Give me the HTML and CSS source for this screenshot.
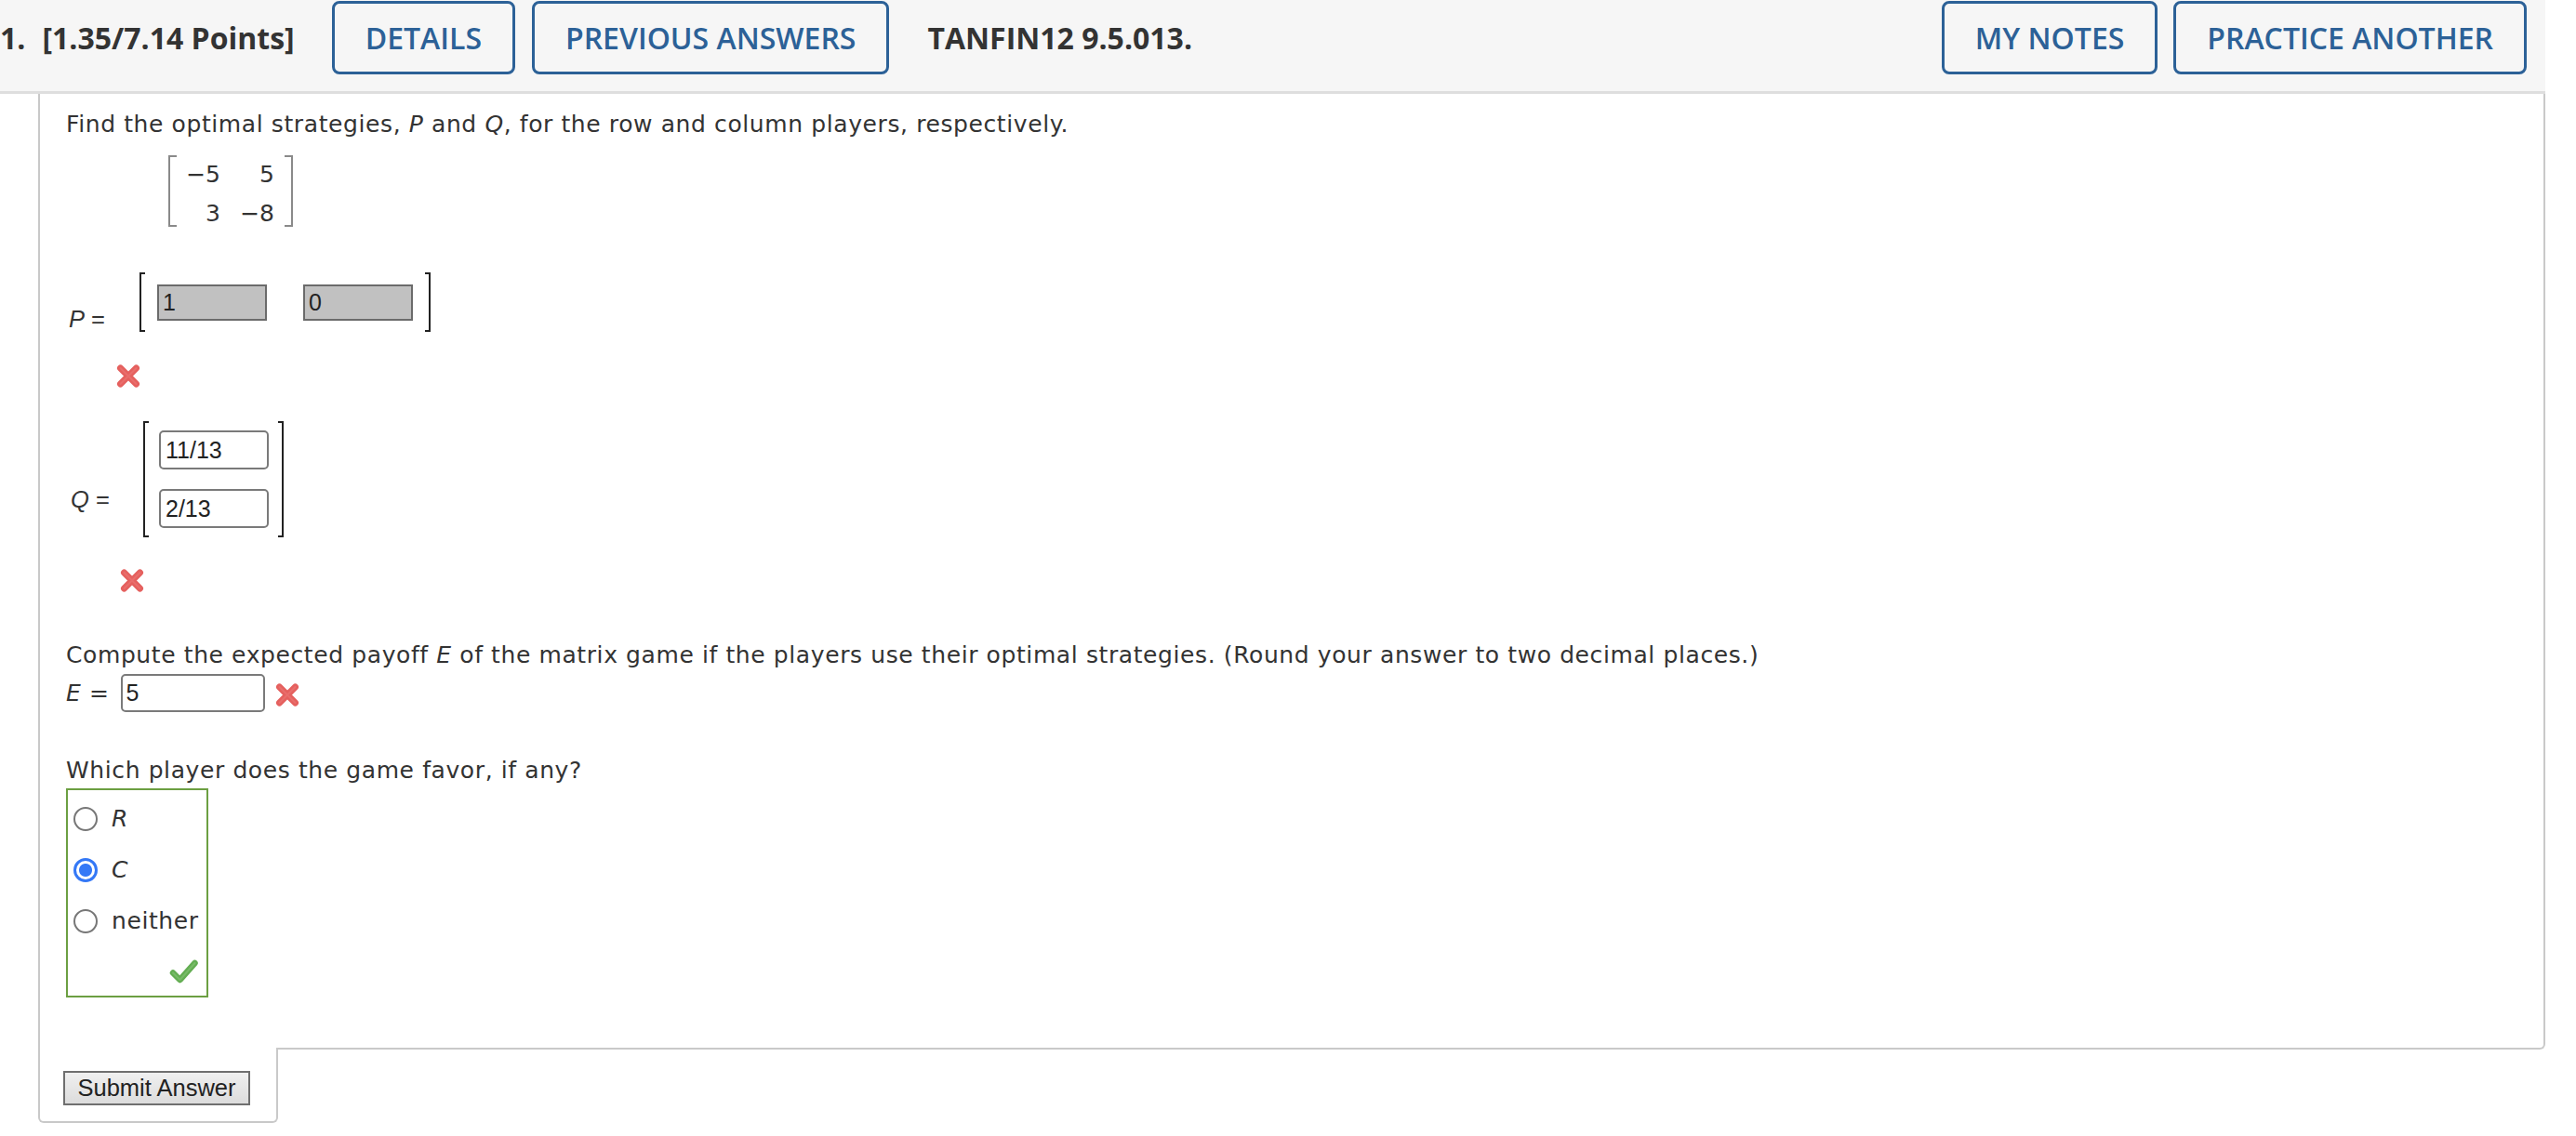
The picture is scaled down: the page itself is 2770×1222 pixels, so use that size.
FILE: index.html
```html
<!DOCTYPE html>
<html lang="en">
<head>
<meta charset="utf-8">
<title>TANFIN12 9.5.013</title>
<link rel="stylesheet" href="styles.css">
</head>
<body>
<div class="page">
  <header class="qhead">
    <span class="qnum">1.</span>
    <span class="qpts">[1.35/7.14 Points]</span>
    <span class="hbtn hbtn-details">DETAILS</span>
    <span class="hbtn hbtn-gap">PREVIOUS ANSWERS</span>
    <span class="qid">TANFIN12 9.5.013.</span>
    <span class="hbtn hbtn-push">MY NOTES</span>
    <span class="hbtn hbtn-gap2">PRACTICE ANOTHER</span>
  </header>

  <div class="qbody">
    <p class="txt p1">Find the optimal strategies, <i>P</i> and <i>Q</i>, for the row and column players, respectively.</p>

    <div class="matrix">
      <span class="mbr mbr-l"></span>
      <div class="mgrid">
        <span>&minus;5</span><span>5</span>
        <span>3</span><span>&minus;8</span>
      </div>
      <span class="mbr mbr-r"></span>
    </div>

    <div class="vrow prow">
      <span class="vlabel"><i>P</i> =</span>
      <span class="vbr vbr-l"></span>
      <div class="vcells vcells-h">
        <input class="ans ans-gray" type="text" value="1" readonly>
        <input class="ans ans-gray" type="text" value="0" readonly>
      </div>
      <span class="vbr vbr-r"></span>
    </div>

    <svg class="xmark xm-p" width="28" height="27" viewBox="0 0 28 27" aria-hidden="true"><path d="M5.5 5 L22.5 22 M22.5 5 L5.5 22" stroke="#e5605e" stroke-width="7" stroke-linecap="round" fill="none"/><path d="M5.5 5 L22.5 22 M22.5 5 L5.5 22" stroke="#ee7b79" stroke-width="2" stroke-linecap="round" fill="none" opacity="0.5"/></svg>

    <div class="vrow qrow">
      <span class="vlabel"><i>Q</i> =</span>
      <span class="vbr vbr-l vbr-tall"></span>
      <div class="vcells vcells-v">
        <input class="ans ans-white" type="text" value="11/13" readonly>
        <input class="ans ans-white" type="text" value="2/13" readonly>
      </div>
      <span class="vbr vbr-r vbr-tall"></span>
    </div>

    <svg class="xmark xm-q" width="28" height="27" viewBox="0 0 28 27" aria-hidden="true"><path d="M5.5 5 L22.5 22 M22.5 5 L5.5 22" stroke="#e5605e" stroke-width="7" stroke-linecap="round" fill="none"/><path d="M5.5 5 L22.5 22 M22.5 5 L5.5 22" stroke="#ee7b79" stroke-width="2" stroke-linecap="round" fill="none" opacity="0.5"/></svg>

    <p class="txt p2">Compute the expected payoff <i>E</i> of the matrix game if the players use their optimal strategies. (Round your answer to two decimal places.)</p>

    <div class="erow">
      <span class="elabel"><i>E</i> =</span>
      <input class="ans ans-e" type="text" value="5" readonly>
      <svg class="xmark xm-e" width="28" height="27" viewBox="0 0 28 27" aria-hidden="true"><path d="M5.5 5 L22.5 22 M22.5 5 L5.5 22" stroke="#e5605e" stroke-width="7" stroke-linecap="round" fill="none"/><path d="M5.5 5 L22.5 22 M22.5 5 L5.5 22" stroke="#ee7b79" stroke-width="2" stroke-linecap="round" fill="none" opacity="0.5"/></svg>
    </div>

    <p class="txt p3">Which player does the game favor, if any?</p>

    <div class="choices">
      <div class="opt"><span class="radio"></span><span class="optlabel"><i>R</i></span></div>
      <div class="opt"><span class="radio radio-on"></span><span class="optlabel"><i>C</i></span></div>
      <div class="opt"><span class="radio"></span><span class="optlabel">neither</span></div>
      <svg class="check" width="31" height="26" viewBox="0 0 31 26" aria-hidden="true"><path d="M4 14.5 L11.5 22 L27.5 4" stroke="#63ad52" stroke-width="6.5" stroke-linecap="round" stroke-linejoin="round" fill="none"/><path d="M4 14.5 L11.5 22 L27.5 4" stroke="#86c576" stroke-width="2" stroke-linecap="round" stroke-linejoin="round" fill="none" opacity="0.6"/></svg>
    </div>
  </div>

  <div class="submit-tab">
    <button class="submit" type="button">Submit Answer</button>
  </div>
</div>
</body>
</html>
```

FILE: styles.css
```css
html, body {
  margin: 0;
  padding: 0;
  background: #ffffff;
}

.page {
  width: 2737px;
}

/* ---------- header ---------- */
.qhead {
  display: flex;
  align-items: center;
  height: 79px;
  padding: 1px 20px 18px 0;
  background: #f6f6f6;
  border-bottom: 3px solid #dedede;
  font-family: "Open Sans", "Liberation Sans", sans-serif;
  font-weight: 700;
  font-size: 32px;
  color: #333333;
  white-space: nowrap;
}

.qpts {
  margin-left: 18px;
}

.hbtn {
  display: flex;
  align-items: center;
  box-sizing: border-box;
  height: 79px;
  padding: 0 33px;
  border: 3px solid #2c6197;
  border-radius: 8px;
  color: #2c6197;
  font-weight: 600;
}

.hbtn-details {
  margin-left: 40px;
}

.hbtn-gap {
  margin-left: 18px;
}

.qid {
  margin-left: 41px;
}

.hbtn-push {
  margin-left: auto;
}

.hbtn-gap2 {
  margin-left: 17px;
}

/* ---------- question body ---------- */
.qbody {
  margin-left: 41px;
  padding: 17px 0 54px 28px;
  border-left: 2px solid #c9c9c9;
  border-right: 2px solid #c9c9c9;
  border-bottom: 2px solid #c9c9c9;
  border-bottom-right-radius: 6px;
  font-family: "DejaVu Sans", Verdana, sans-serif;
  font-size: 25px;
  letter-spacing: 0.6px;
  color: #333333;
}

.txt {
  margin: 0;
  line-height: 31px;
}

.p2 {
  margin-top: 51px;
}

.p3 {
  margin-top: 47px;
}

/* matrix */
.matrix {
  display: flex;
  align-items: flex-start;
  margin: 18px 0 0 110px;
  letter-spacing: 0;
}

.mbr {
  box-sizing: border-box;
  width: 9px;
  height: 77px;
  border: 2px solid #8a8a8a;
}

.mbr-l {
  border-right: none;
  margin-right: 2px;
}

.mbr-r {
  border-left: none;
  margin-left: 2px;
}

.mgrid {
  display: grid;
  grid-template-columns: 45px 58px;
  padding-right: 9px;
  line-height: 42px;
  text-align: right;
}

/* vectors P, Q */
.vrow {
  display: flex;
  align-items: stretch;
  letter-spacing: 0;
}

.prow {
  margin: 42px 0 0 3px;
  height: 64px;
}

.qrow {
  margin: 35px 0 0 5px;
  height: 125px;
}

.vlabel {
  font-family: "Liberation Sans", Arial, sans-serif;
  font-size: 25.5px;
  line-height: 30px;
}

.prow .vlabel {
  width: 76px;
  margin-top: 35px;
}

.qrow .vlabel {
  width: 78px;
  margin-top: 69px;
}

.vbr {
  box-sizing: border-box;
  width: 6px;
  border: 2px solid #222222;
}

.vbr-l {
  border-right: none;
}

.vbr-r {
  border-left: none;
}

.vcells {
  display: flex;
}

.vcells-h {
  align-items: center;
  gap: 39px;
  padding: 0 13px;
}

.vcells-v {
  flex-direction: column;
  gap: 21px;
  padding: 10px 10px 10px 11px;
}

.ans {
  box-sizing: border-box;
  margin: 0;
  padding: 0 0 0 5px;
  font-family: "Liberation Sans", Arial, sans-serif;
  font-size: 25px;
  letter-spacing: 0;
  color: #222222;
  outline: none;
}

.ans-gray {
  width: 118px;
  height: 39px;
  padding-left: 4px;
  background: #c1c1c1;
  border: 2px solid #6b6b6b;
  border-radius: 0;
}

.ans-white {
  width: 118px;
  height: 42px;
  background: #ffffff;
  border: 2px solid #7a7a7a;
  border-radius: 5px;
}

.ans-e {
  width: 155px;
  height: 41px;
  padding-left: 4px;
  background: #ffffff;
  border: 2px solid #7a7a7a;
  border-radius: 5px;
}

.xmark {
  display: block;
}

.xm-p {
  margin: 34px 0 0 53px;
}

.xm-q {
  margin: 33px 0 0 57px;
}

/* E row */
.erow {
  display: flex;
  align-items: center;
  margin-top: 5px;
  line-height: 31px;
}

.elabel {
  margin-right: 12px;
}

.xm-e {
  margin-left: 10px;
  margin-top: 4px;
}

/* choices */
.choices {
  box-sizing: border-box;
  display: flex;
  flex-direction: column;
  width: 153px;
  height: 225px;
  margin-top: 4px;
  padding: 3px 0 0 6px;
  border: 2px solid #6c9f42;
}

.opt {
  display: flex;
  align-items: center;
  height: 55px;
  line-height: 31px;
}

.radio {
  box-sizing: border-box;
  width: 26px;
  height: 26px;
  border: 2px solid #777777;
  border-radius: 50%;
  background: #ffffff;
  flex: none;
}

.radio-on {
  border: 3px solid #3478f6;
  background: radial-gradient(circle, #3478f6 0 6.5px, #ffffff 7.5px);
}

.optlabel {
  margin-left: 15px;
}

.check {
  display: block;
  align-self: flex-end;
  margin: 14px 9px 0 0;
}

/* submit tab */
.submit-tab {
  box-sizing: border-box;
  width: 258px;
  margin: -2px 0 0 41px;
  padding: 25px 0 17px 25px;
  background: #ffffff;
  border-left: 2px solid #c9c9c9;
  border-right: 2px solid #c9c9c9;
  border-bottom: 2px solid #c9c9c9;
  border-radius: 0 0 6px 6px;
}

.submit {
  display: block;
  box-sizing: border-box;
  width: 201px;
  height: 37px;
  margin: 0;
  padding: 0;
  font-family: "Liberation Sans", Arial, sans-serif;
  font-size: 25.5px;
  color: #222222;
  background: linear-gradient(#f0f0f0, #dcdcdc);
  border: 2px solid #6f6f6f;
  border-radius: 0;
}
```
